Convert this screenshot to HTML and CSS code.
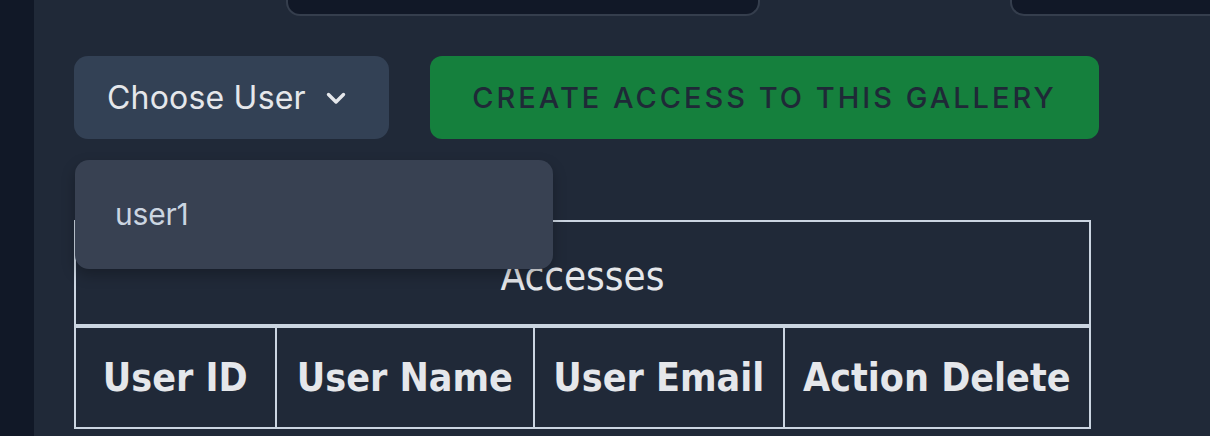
FILE: index.html
```html
<!DOCTYPE html>
<html>
<head>
<meta charset="utf-8">
<link rel="stylesheet" href="styles.css">
</head>
<body>
<div class="app">
  <aside class="sidebar"></aside>
  <main class="main">
    <div class="tabs">
      <div class="tab tab-a"></div>
      <div class="tab tab-b"></div>
    </div>
    <div class="actions">
      <div class="select-wrap">
        <button class="select">Choose User
          <svg class="chev" width="20" height="20" viewBox="0 0 20 20"><path d="M2.5 6.5l7.5 7.5 7.5-7.5" fill="none" stroke="#e5e7eb" stroke-width="3.4" stroke-linecap="round" stroke-linejoin="round"/></svg>
        </button>
        <div class="menu">
          <div class="menu-item">user1</div>
        </div>
      </div>
      <button class="create">CREATE ACCESS TO THIS GALLERY</button>
    </div>
    <table class="grid">
      <thead>
        <tr><th colspan="4" class="title">Accesses</th></tr>
      </thead>
      <tbody>
        <tr>
          <th class="c1">User ID</th>
          <th class="c2">User Name</th>
          <th class="c3">User Email</th>
          <th class="c4">Action Delete</th>
        </tr>
      </tbody>
    </table>
  </main>
</div>
</body>
</html>
```
FILE: styles.css
```css
* { box-sizing: border-box; }
html, body { margin: 0; padding: 0; }
body {
  background: #1f2937;
  width: 1210px;
  height: 436px;
  overflow: hidden;
  font-family: "Inter", "Liberation Sans", sans-serif;
}
.app { display: flex; height: 436px; }
.sidebar { width: 34px; background: #111827; flex: none; }
.main { flex: 1; background: #202938; padding-left: 40px; }
.tabs { display: flex; height: 16px; }
.tab {
  background: #111827;
  border: 2px solid #353e4d;
  border-top: none;
  border-radius: 0 0 14px 14px;
  height: 16px;
}
.tab-a { margin-left: 212px; width: 474px; }
.tab-b { margin-left: 250px; flex: 1; border-right: none; border-bottom-right-radius: 0; }
.actions {
  display: flex;
  gap: 41px;
  margin-top: 40px;
  height: 83px;
}
.select-wrap { position: relative; }
.select {
  width: 315px;
  height: 83px;
  background: #334155;
  border: none;
  border-radius: 14px;
  color: #e5e7eb;
  font-family: "Inter", "Liberation Sans", sans-serif;
  font-size: 32px;
  padding: 0 0 0 33px;
  display: flex;
  align-items: center;
  gap: 20px;
  letter-spacing: 0.2px;
}
.chev { margin-top: 1px; }
.menu {
  position: absolute;
  left: 1px;
  top: 104px;
  width: 478px;
  height: 109px;
  background: #384152;
  border-radius: 14px;
  box-shadow: 0 6px 14px rgba(0,0,0,0.25);
  z-index: 2;
  padding: 35px 0 0 40px;
}
.menu-item {
  color: #cbd5e1;
  font-size: 30px;
  line-height: 38px;
  letter-spacing: -0.2px;
}
.create {
  width: 669px;
  height: 83px;
  background: #15803d;
  border: none;
  border-radius: 12px;
  color: #1f2937;
  font-family: "Inter", "Liberation Sans", sans-serif;
  font-weight: 500;
  font-size: 29px;
  letter-spacing: 3px;
  display: flex;
  align-items: center;
  justify-content: center;
  padding: 0;
}
.grid {
  margin-top: 81px;
  border-collapse: collapse;
  width: 1017px;
  color: #e5e7eb;
  font-family: "Comic Sans MS", "DejaVu Sans Condensed", "DejaVu Sans", sans-serif;
}
.grid th { border: 2px solid #cbd5e1; padding: 0; }
.title {
  height: 105px;
  font-weight: normal;
  font-size: 40px;
  padding-top: 6px !important;
  border-bottom-width: 4px !important;
}
.grid tbody th { height: 102px; font-size: 39px; font-weight: bold; }
.c1 { width: 201px; }
.c2 { width: 259px; }
.c3 { width: 250px; }
.c4 { width: 307px; }
```
